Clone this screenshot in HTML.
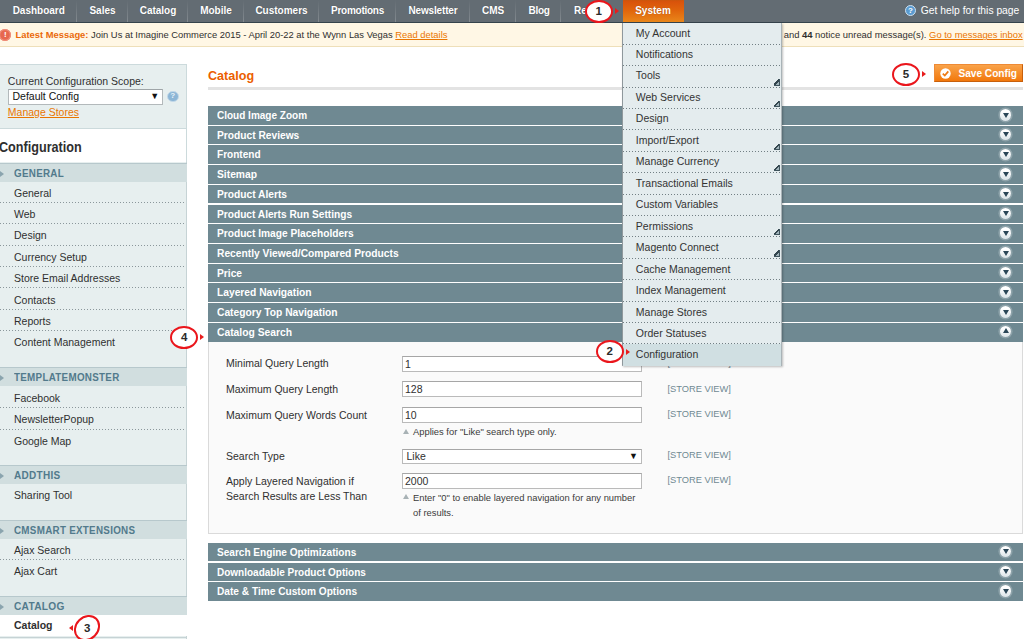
<!DOCTYPE html>
<html lang="en">
<head>
<meta charset="utf-8">
<title>Configuration / System / Magento Admin</title>
<style>
*{box-sizing:border-box;margin:0;padding:0}
html,body{width:1024px;height:639px;overflow:hidden;background:#fff}
body{font-family:"Liberation Sans",Arial,Helvetica,sans-serif;font-size:10.5px;color:#2f2f2f;position:relative}
a{color:#ea7601}
.abs{position:absolute}
/* top nav */
#nav{position:absolute;left:0;top:0;width:1024px;height:22.7px;background:#636c73;border-bottom:1px solid #35434c}
#nav .it{position:absolute;top:0;height:22px;line-height:22px;color:#fff;font-weight:bold;font-size:10px;text-align:center;padding-left:2px;border-right:1px solid transparent;border-image:linear-gradient(rgba(255,255,255,0) 5%,rgba(255,255,255,.22) 100%) 1;white-space:nowrap;text-shadow:0 0 1px rgba(0,0,0,.3)}
#nav .it.act{background:linear-gradient(#c9560d 0,#d9530b 8%,#e0640c 45%,#e9861a 100%);border:none;padding-left:0;padding-right:1px}
#help{position:absolute;right:4.7px;top:0;height:22px;line-height:21.6px;color:#fff;font-size:10.3px;white-space:nowrap}
/* message */
#msg{position:absolute;left:0;top:23px;width:1024px;height:23.5px;background:#fff7e5;border-bottom:1px solid #eedfb9;font-size:9.39px;line-height:24.6px;color:#2f2f2f;white-space:nowrap}
#msg b{color:#ea6a0a}
/* sidebar */
#scope{position:absolute;left:-1px;top:64px;width:187.5px;height:65px;background:#e7efef;border:1px solid #ccdadc}
#conf{position:absolute;left:-1px;top:128.3px;width:187.5px;height:34px;background:#fff;border:1px solid #ccdadc;border-left:none;border-bottom:none}
#tabs{position:absolute;left:0;top:162.25px;width:186.5px;height:480px;background:#e7efef;border-right:1px solid #c6d3d5}
.gh{position:absolute;left:0;width:187px;margin-top:0.6px;z-index:2;height:19.3px;border-top:1px solid #b7c8cc;background:#d1dedf;color:#527a8c;font-weight:bold;font-size:10.2px;line-height:20.8px;overflow:hidden;padding-left:13.5px;letter-spacing:.3px;white-space:nowrap}
.gh:before{content:"";position:absolute;left:0;top:7px;border-left:4px solid #8aa4ae;border-top:3px solid transparent;border-bottom:3px solid transparent}
.ti{position:absolute;left:0;width:186px;height:21.45px;line-height:23.2px;overflow:hidden;padding-left:14px;font-size:10.5px;color:#2f2f2f;white-space:nowrap;background:repeating-linear-gradient(90deg,#8b979b 0,#8b979b 1px,transparent 1px,transparent 3px) left bottom/100% 1px no-repeat}
.ti.last{background:none}
.ti.act{background:#fff;font-weight:bold;width:187px;height:22.2px}
.gsep{position:absolute;left:0;width:186px;height:1px;background:#c6d3d5}
/* main */
.sh span,.gh span{display:inline-block;transform-origin:0 50%;white-space:nowrap}
.gh span{transform:scaleX(.963)}
.sh{position:absolute;left:208px;width:814.5px;height:18.7px;background:#6f8992;color:#fff;font-weight:bold;font-size:10.2px;line-height:19.6px;padding-left:9px;white-space:nowrap}
.sh i{position:absolute;right:11.1px;top:3.2px;width:11.4px;height:11.4px;border-radius:50%;background:linear-gradient(#fff 20%,#dbe4e8);box-shadow:0 0 0 1.6px rgba(255,255,255,.22)}
.sh i:after{content:"";position:absolute;left:2.5px;top:3.6px;border-top:5.2px solid #2a4657;border-left:3.2px solid transparent;border-right:3.2px solid transparent}
.sh i.up:after{border-top:none;border-bottom:5.2px solid #2a4657;top:2.6px}
#fs{position:absolute;left:208px;top:341.8px;width:814.5px;height:192.7px;background:#fafafa;border:1px solid #dadada;border-top:none}
.lb{position:absolute;left:226px;font-size:10.5px;color:#2f2f2f;white-space:nowrap;line-height:16px}
.inp{position:absolute;left:402px;width:240px;height:16.3px;background:#fff;border:1px solid #bababa;border-top-color:#a6a6a6;font-size:10.5px;line-height:14px;padding-left:2px;color:#2f2f2f}
.sv{position:absolute;left:667.5px;font-size:9.3px;margin-top:0px;color:#6f8992;white-space:nowrap}
.nt{position:absolute;left:413px;font-size:9.4px;color:#3b3b3b;white-space:nowrap;line-height:14.5px}
.nt:before{content:"";position:absolute;left:-10px;top:4px;border-bottom:5px solid #a8b2b5;border-left:3px solid transparent;border-right:3px solid transparent}
/* dropdown */
#dd{position:absolute;left:622.3px;top:23px;padding-top:0;width:159.5px;height:343.1px;background:#e4ecee;border:1px solid #a9b3b7;border-left-color:#8f989c;border-top:none;box-shadow:1px 1px 2px rgba(0,0,0,.25)}
#dd .mi{position:absolute;left:0;width:157.5px;height:21.38px;line-height:19.4px;padding-left:12.5px;font-size:10.5px;color:#333;white-space:nowrap;background:repeating-linear-gradient(90deg,#727f84 0,#727f84 1px,transparent 1px,transparent 3px) left bottom/100% 1px no-repeat}
#dd .mi.sub:after{content:"";position:absolute;right:0.8px;bottom:2.2px;width:5.2px;height:5.2px;background:linear-gradient(135deg,transparent 0,transparent 44%,#34464e 44%,#34464e 66%,#9fb2b9 66%,#9fb2b9 100%);border-right:1px solid #3f545d;border-bottom:1px solid #3f545d}
#dd .mi.hov{background:#d0dfe2}
/* callouts */
.co{position:absolute;width:28.4px;height:23.2px;border:2px solid #ea161c;border-radius:50%;background:#fff;color:#2a2a2a;font-weight:bold;font-size:11.5px;line-height:19px;text-align:center}
.ar{position:absolute;border-left:4.6px solid #e81c1c;border-top:3px solid transparent;border-bottom:3px solid transparent;margin-top:-0.3px}
.al{position:absolute;border-right:4.6px solid #e81c1c;border-top:3.1px solid transparent;border-bottom:3.1px solid transparent}
</style>
</head>
<body>
<!-- NAV -->
<div id="nav">
  <div class="it" style="left:0;width:76.5px">Dashboard</div>
  <div class="it" style="left:76.5px;width:51px">Sales</div>
  <div class="it" style="left:127.5px;width:60px">Catalog</div>
  <div class="it" style="left:187.5px;width:56px">Mobile</div>
  <div class="it" style="left:243.5px;width:75px">Customers</div>
  <div class="it" style="left:318.5px;width:77px;letter-spacing:-0.26px">Promotions</div>
  <div class="it" style="left:395.5px;width:74px;letter-spacing:-0.16px">Newsletter</div>
  <div class="it" style="left:468.8px;width:47.5px">CMS</div>
  <div class="it" style="left:516px;width:45px;letter-spacing:-0.3px">Blog</div>
  <div class="it" style="left:562px;width:61px;border-right:none;text-align:left;padding-left:12px">Reports</div>
  <div class="it act" style="left:623px;width:61px">System</div>
  <div id="help"><span style="display:inline-block;width:11px;height:11px;border-radius:50%;background:#5a9bd0;border:1px solid #cfe2f2;color:#fff;font-size:8px;line-height:9px;text-align:center;font-weight:bold;vertical-align:1px;margin-right:5px">?</span>Get help for this page</div>
</div>
<!-- MESSAGE BAR -->
<div id="msg">
  <span class="abs" style="left:-0.6px;top:5.6px;width:12px;height:12px;border-radius:50%;background:#e7674f;box-shadow:inset 0 0 0 1.2px #ef8f7c;color:#fff;font-size:8px;line-height:12px;text-align:center;font-weight:bold">!</span>
  <span class="abs" style="left:15.5px;top:0"><b>Latest Message:</b> Join Us at Imagine Commerce 2015 - April 20-22 at the Wynn Las Vegas <a style="text-decoration:underline">Read details</a></span>
  <span class="abs" style="left:783.7px;top:0.2px;font-size:9.42px">and <b style="color:#2f2f2f">44</b> notice unread message(s). <a style="text-decoration:underline">Go to messages inbox</a></span>
</div>
<!-- SIDEBAR -->
<div id="scope">
  <div class="abs" style="left:7.8px;top:8.7px;font-size:10.5px;line-height:14px;white-space:nowrap">Current Configuration Scope:</div>
  <div class="abs" style="left:7.5px;top:24px;width:155.6px;height:15.8px;background:#fff;border:1px solid #b3b9bb;border-top-color:#9fa5a8;font-size:10.5px;line-height:13px;padding-left:4px;color:#111">Default Config<span class="abs" style="right:3px;top:0.3px;font-size:9px">▼</span></div>
  <div class="abs" style="left:167px;top:25.5px;width:11.5px;height:11.5px;border-radius:50%;background:#8db6d6;border:1.5px solid #c5daea;color:#e8f1f8;font-size:8px;line-height:8.5px;text-align:center;font-weight:bold">?</div>
  <a class="abs" style="left:7.8px;top:39.5px;font-size:10.5px;line-height:14px;text-decoration:underline;white-space:nowrap">Manage Stores</a>
</div>
<div id="conf"><div class="abs" style="left:-0.4px;top:9.7px;font-size:13.8px;transform:scaleX(.915);transform-origin:0 50%;font-weight:bold;color:#2f2f2f;line-height:18px;white-space:nowrap">Configuration</div></div>
<div id="tabs">
  <div class="gh" style="top:0.00px"><span>GENERAL</span></div>
  <div class="ti" style="top:19.00px;line-height:25px">General</div>
  <div class="ti" style="top:40.45px">Web</div>
  <div class="ti" style="top:61.90px">Design</div>
  <div class="ti" style="top:83.35px">Currency Setup</div>
  <div class="ti" style="top:104.80px">Store Email Addresses</div>
  <div class="ti" style="top:126.25px">Contacts</div>
  <div class="ti" style="top:147.70px">Reports</div>
  <div class="ti last" style="top:169.15px">Content Management</div>
  <div class="gh" style="top:204.25px"><span>TEMPLATEMONSTER</span></div>
  <div class="ti" style="top:224.45px">Facebook</div>
  <div class="ti" style="top:245.90px">NewsletterPopup</div>
  <div class="ti last" style="top:267.35px">Google Map</div>
  <div class="gh" style="top:302.00px"><span style="transform:scaleX(.98)">ADDTHIS</span></div>
  <div class="ti last" style="top:321.80px">Sharing Tool</div>
  <div class="gh" style="top:357.00px"><span>CMSMART EXTENSIONS</span></div>
  <div class="ti" style="top:376.70px">Ajax Search</div>
  <div class="ti last" style="top:398.15px">Ajax Cart</div>
  <div class="gh" style="top:433.00px"><span style="transform:scaleX(.995)">CATALOG</span></div>
  <div class="ti act" style="top:452.00px">Catalog</div>
  <div class="gsep" style="top:474.25px"></div>
</div>
<!-- MAIN -->
<div class="abs" style="left:208px;top:68.2px;font-size:12.6px;font-weight:bold;color:#eb5e00;line-height:16px">Catalog</div>
<div class="abs" style="left:208px;top:86.9px;width:814.5px;height:3px;background:#e3e3e3"></div>
<div class="abs" style="left:933.7px;top:64.4px;width:89.7px;height:17.7px;background:linear-gradient(#f9a34a,#f2780c);border:1px solid;border-color:#ee8a35 #c8600c #c8600c #ee8a35;color:#fff;font-weight:bold;font-size:10.15px;line-height:15px;white-space:nowrap">
  <svg class="abs" style="left:5.5px;top:2.6px" width="11" height="11" viewBox="0 0 11 11"><circle cx="5.5" cy="5.5" r="5.2" fill="#fff"/><path d="M2.8 5.6 L4.8 7.6 L8.3 3.4" fill="none" stroke="#ee7a14" stroke-width="1.7"/></svg>
  <span class="abs" style="left:23.7px;top:0.4px">Save Config</span>
</div>

<div class="sh" style="top:106px"><span style="transform:scaleX(0.982)">Cloud Image Zoom</span><i></i></div>
<div class="sh" style="top:125.7px"><span style="transform:scaleX(1.002)">Product Reviews</span><i></i></div>
<div class="sh" style="top:145.4px"><span style="transform:scaleX(0.986)">Frontend</span><i></i></div>
<div class="sh" style="top:165.1px"><span style="transform:scaleX(1.009)">Sitemap</span><i></i></div>
<div class="sh" style="top:184.8px"><span style="transform:scaleX(1.002)">Product Alerts</span><i></i></div>
<div class="sh" style="top:204.5px"><span style="transform:scaleX(0.997)">Product Alerts Run Settings</span><i></i></div>
<div class="sh" style="top:224.2px"><span style="transform:scaleX(0.998)">Product Image Placeholders</span><i></i></div>
<div class="sh" style="top:243.9px"><span style="transform:scaleX(1.007)">Recently Viewed/Compared Products</span><i></i></div>
<div class="sh" style="top:263.6px"><span style="transform:scaleX(1.003)">Price</span><i></i></div>
<div class="sh" style="top:283.3px"><span style="transform:scaleX(1.006)">Layered Navigation</span><i></i></div>
<div class="sh" style="top:303px"><span style="transform:scaleX(1.006)">Category Top Navigation</span><i></i></div>
<div class="sh" style="top:322.7px;height:19.5px"><span style="transform:scaleX(1.011)">Catalog Search</span><i class="up"></i></div>
<div id="fs"></div>
<div class="lb" style="top:355px">Minimal Query Length</div>
<div class="inp" style="top:355.6px">1</div>
<div class="sv" style="top:358px">[STORE VIEW]</div>
<div class="lb" style="top:380.5px">Maximum Query Length</div>
<div class="inp" style="top:381.2px">128</div>
<div class="sv" style="top:383.5px">[STORE VIEW]</div>
<div class="lb" style="top:407px">Maximum Query Words Count</div>
<div class="inp" style="top:407px">10</div>
<div class="sv" style="top:409px">[STORE VIEW]</div>
<div class="nt" style="top:425px">Applies for "Like" search type only.</div>
<div class="lb" style="top:448px">Search Type</div>
<div class="inp" style="top:448.6px;height:15.3px;line-height:13px;padding-left:3.5px">Like<span class="abs" style="right:3.2px;top:0.2px;font-size:9px;color:#111">▼</span></div>
<div class="sv" style="top:450px">[STORE VIEW]</div>
<div class="lb" style="top:473.6px;line-height:15.5px">Apply Layered Navigation if<br>Search Results are Less Than</div>
<div class="inp" style="top:473px">2000</div>
<div class="sv" style="top:475px">[STORE VIEW]</div>
<div class="nt" style="top:489.6px;line-height:15.5px">Enter "0" to enable layered navigation for any number<br>of results.</div>

<div class="sh" style="top:542.7px"><span style="transform:scaleX(0.988)">Search Engine Optimizations</span><i></i></div>
<div class="sh" style="top:562.5px"><span style="transform:scaleX(0.981)">Downloadable Product Options</span><i></i></div>
<div class="sh" style="top:582.2px"><span style="transform:scaleX(0.995)">Date &amp; Time Custom Options</span><i></i></div>

<!-- DROPDOWN -->
<div id="dd">
  <div class="mi" style="top:0.60px">My Account</div>
  <div class="mi" style="top:21.98px">Notifications</div>
  <div class="mi sub" style="top:43.36px">Tools</div>
  <div class="mi sub" style="top:64.74px">Web Services</div>
  <div class="mi" style="top:86.12px">Design</div>
  <div class="mi sub" style="top:107.50px">Import/Export</div>
  <div class="mi sub" style="top:128.88px">Manage Currency</div>
  <div class="mi" style="top:150.26px;line-height:21px">Transactional Emails</div>
  <div class="mi" style="top:171.64px;line-height:18.8px">Custom Variables</div>
  <div class="mi sub" style="top:193.02px;line-height:20.9px">Permissions</div>
  <div class="mi sub" style="top:214.40px;line-height:20.9px">Magento Connect</div>
  <div class="mi" style="top:235.78px;line-height:20.9px">Cache Management</div>
  <div class="mi" style="top:257.16px;line-height:20.9px">Index Management</div>
  <div class="mi" style="top:278.54px;line-height:20.9px">Manage Stores</div>
  <div class="mi" style="top:299.92px;line-height:20.9px">Order Statuses</div>
  <div class="mi hov" style="top:321.30px;line-height:20.9px">Configuration</div>
</div>

<!-- CALLOUTS -->
<div class="co" style="left:584.5px;top:0.2px">1</div><div class="ar" style="left:614.5px;top:8.5px"></div>
<div class="co" style="left:595.5px;top:340px">2</div><div class="ar" style="left:625.5px;top:349px"></div>
<div class="co" style="left:73.4px;top:615.7px;width:28px;height:24px;line-height:20px;transform:rotate(-45deg)"><span style="display:inline-block;transform:rotate(45deg)">3</span></div><div class="al" style="left:68.7px;top:624.8px"></div>
<div class="co" style="left:170px;top:325.6px">4</div><div class="ar" style="left:200px;top:334.5px"></div>
<div class="co" style="left:891.7px;top:62.5px">5</div><div class="ar" style="left:922.3px;top:71px"></div>
</body>
</html>
